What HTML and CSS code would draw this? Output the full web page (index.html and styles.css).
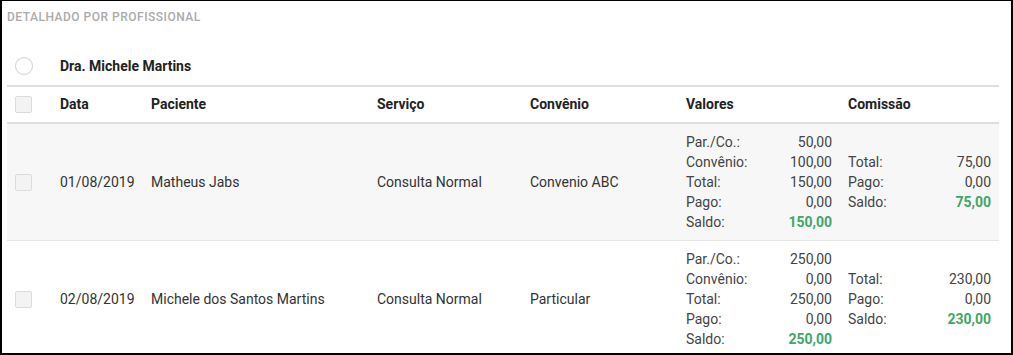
FILE: index.html
```html
<!DOCTYPE html>
<html lang="pt-BR">
<head>
<meta charset="utf-8">
<link rel="stylesheet" href="styles.css">
</head>
<body>
<div class="panel">
  <div class="title">Detalhado por profissional</div>
  <table class="grid">
    <colgroup>
      <col class="c-check"><col class="c-data"><col class="c-pac"><col class="c-serv"><col class="c-conv"><col class="c-val"><col class="c-com">
    </colgroup>
    <tbody>
      <tr class="group">
        <td><span class="radio"></span></td>
        <td colspan="6" class="group-name">Dra. Michele Martins</td>
      </tr>
      <tr class="head">
        <td><span class="check"></span></td>
        <td>Data</td>
        <td>Paciente</td>
        <td>Serviço</td>
        <td>Convênio</td>
        <td>Valores</td>
        <td>Comissão</td>
      </tr>
      <tr class="row alt">
        <td><span class="check"></span></td>
        <td>01/08/2019</td>
        <td>Matheus Jabs</td>
        <td>Consulta Normal</td>
        <td>Convenio ABC</td>
        <td>
          <div class="kv">
            <span>Par./Co.:</span><span class="v">50,00</span>
            <span>Convênio:</span><span class="v">100,00</span>
            <span>Total:</span><span class="v">150,00</span>
            <span>Pago:</span><span class="v">0,00</span>
            <span>Saldo:</span><span class="v pos">150,00</span>
          </div>
        </td>
        <td>
          <div class="kv">
            <span>Total:</span><span class="v">75,00</span>
            <span>Pago:</span><span class="v">0,00</span>
            <span>Saldo:</span><span class="v pos">75,00</span>
          </div>
        </td>
      </tr>
      <tr class="row">
        <td><span class="check"></span></td>
        <td>02/08/2019</td>
        <td>Michele dos Santos Martins</td>
        <td>Consulta Normal</td>
        <td>Particular</td>
        <td>
          <div class="kv">
            <span>Par./Co.:</span><span class="v">250,00</span>
            <span>Convênio:</span><span class="v">0,00</span>
            <span>Total:</span><span class="v">250,00</span>
            <span>Pago:</span><span class="v">0,00</span>
            <span>Saldo:</span><span class="v pos">250,00</span>
          </div>
        </td>
        <td>
          <div class="kv">
            <span>Total:</span><span class="v">230,00</span>
            <span>Pago:</span><span class="v">0,00</span>
            <span>Saldo:</span><span class="v pos">230,00</span>
          </div>
        </td>
      </tr>
    </tbody>
  </table>
</div>
</body>
</html>
```
FILE: styles.css
```css
html, body {
  margin: 0;
  padding: 0;
}
body {
  width: 1013px;
  height: 355px;
  box-sizing: border-box;
  border-top: 1px solid #000;
  border-left: 2px solid #000;
  border-right: 2px solid #000;
  border-bottom: 2px solid #000;
  overflow: hidden;
  background: #fff;
  font-family: Roboto, "Liberation Sans", sans-serif;
  font-size: 14px;
  color: #333;
}
.panel {
  padding: 0 12px 0 5px;
}
.title {
  padding-top: 10px;
  font-size: 12px;
  line-height: 13px;
  font-weight: 500;
  letter-spacing: 0.5px;
  text-transform: uppercase;
  color: #ababab;
}
.grid {
  margin-top: 23px;
  width: 992px;
  table-layout: fixed;
  border-collapse: separate;
  border-spacing: 0;
}
.c-check { width: 45px; }
.c-data { width: 91px; }
.c-pac { width: 226px; }
.c-serv { width: 153px; }
.c-conv { width: 156px; }
.c-val { width: 162px; }
.c-com { width: 159px; }
.grid td {
  padding: 8px;
  vertical-align: middle;
  text-align: left;
}
.group td {
  padding-top: 9px;
  padding-bottom: 9px;
  line-height: 20px;
  border-bottom: 2px solid #dedede;
}
.group-name {
  font-weight: 700;
  color: #222;
}
.head td {
  line-height: 19px;
  font-weight: 700;
  color: #222;
  border-bottom: 2px solid #dedede;
}
.row td {
  line-height: 20px;
  border-bottom: 1px solid #e6e6e6;
}
.row.alt td {
  background: #f7f7f7;
}
.radio {
  display: block;
  width: 16px;
  height: 16px;
  border: 1px solid #d0d0d0;
  border-radius: 50%;
  background: #fff;
}
.check {
  display: block;
  width: 15px;
  height: 15px;
  border: 1px solid #dcdcdc;
  border-radius: 2px;
  background: #f3f3f3;
}
.kv {
  display: grid;
  grid-template-columns: 1fr auto;
  line-height: 20px;
  color: #444;
}
.kv .v {
  text-align: right;
}
.kv .pos {
  color: #3fa66a;
  font-weight: 700;
}
```
